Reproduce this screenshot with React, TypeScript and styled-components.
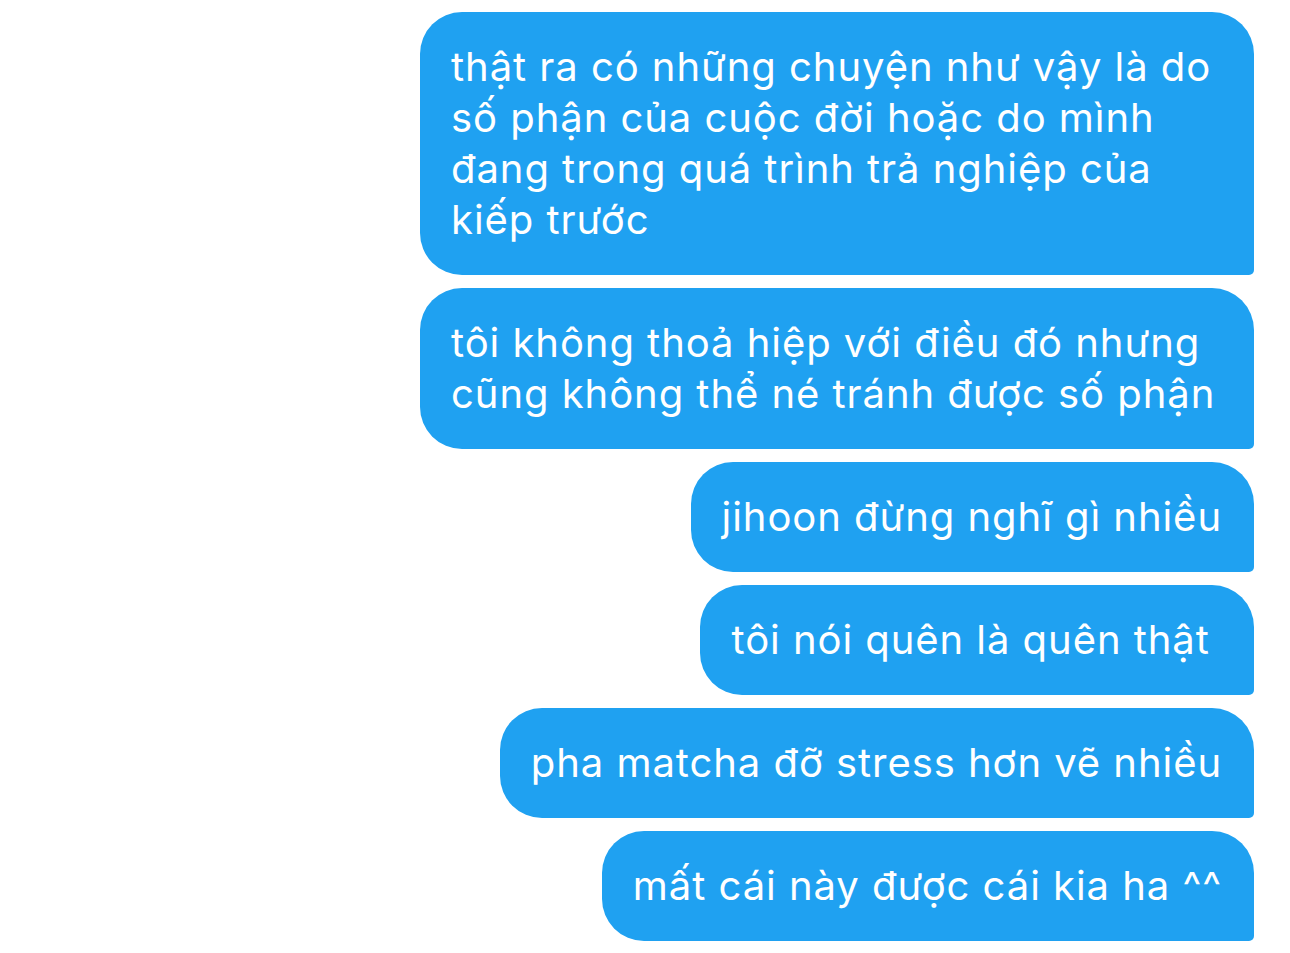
import React from "react";
import styled, { createGlobalStyle } from "styled-components";

const GlobalStyle = createGlobalStyle`
  html, body {
    margin: 0;
    padding: 0;
    background: #ffffff;
  }
  body {
    font-family: Inter, "Noto Sans", "Open Sans", sans-serif;
  }
`;

const Thread = styled.div`
  display: flex;
  flex-direction: column;
  align-items: flex-end;
  gap: 13px;
  padding: 12px 36px 12px 0;
  width: 1290px;
  box-sizing: border-box;
`;

const Bubble = styled.div<{ $wide?: boolean }>`
  box-sizing: border-box;
  max-width: 834px;
  width: ${(p) => (p.$wide ? "834px" : "auto")};
  background: #1fa1f1;
  color: #ffffff;
  font-family: Inter, "Noto Sans", sans-serif;
  font-size: 40px;
  line-height: 51px;
  letter-spacing: 0.95px;
  padding: 29px 32px 30px 31px;
  border-radius: 42px 42px 5px 42px;
  white-space: pre;
`;

const messages: { lines: string[]; wide?: boolean }[] = [
  {
    lines: [
      "thật ra có những chuyện như vậy là do",
      "số phận của cuộc đời hoặc do mình",
      "đang trong quá trình trả nghiệp của",
      "kiếp trước",
    ],
    wide: true,
  },
  {
    lines: [
      "tôi không thoả hiệp với điều đó nhưng",
      "cũng không thể né tránh được số phận",
    ],
    wide: true,
  },
  { lines: ["jihoon đừng nghĩ gì nhiều"] },
  { lines: ["tôi nói quên là quên thật "] },
  { lines: ["pha matcha đỡ stress hơn vẽ nhiều"] },
  { lines: ["mất cái này được cái kia ha ^^"] },
];

export default function App() {
  return (
    <>
      <GlobalStyle />
      <Thread>
        {messages.map((m, i) => (
          <Bubble key={i} $wide={m.wide}>
            {m.lines.map((l, j) => (
              <React.Fragment key={j}>
                {j > 0 && <br />}
                {l}
              </React.Fragment>
            ))}
          </Bubble>
        ))}
      </Thread>
    </>
  );
}
